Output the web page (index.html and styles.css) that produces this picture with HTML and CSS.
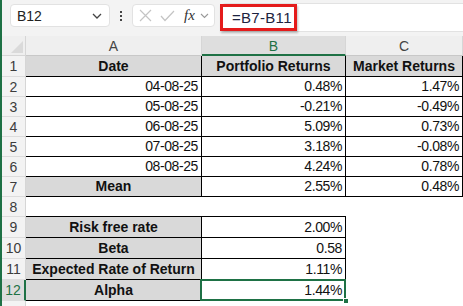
FILE: index.html
```html
<!DOCTYPE html>
<html lang="en">
<head>
    <meta charset="UTF-8">
    <title>Alpha</title>
    <link rel="stylesheet" href="styles.css">
</head>
<body>
    <div class="window">
        <!-- Barra de fórmulas -->
        <div class="toolbar">
            <div class="name-box">
                <span>B12</span>
                <svg class="chev" width="10" height="6" viewBox="0 0 10 6"><polyline points="1,1 5,5 9,1" fill="none" stroke="#444" stroke-width="1.3"/></svg>
            </div>
            <div class="dots"><i></i><i></i><i></i></div>
            <div class="fx-box">
                <svg width="13" height="13" viewBox="0 0 13 13"><path d="M1 1 L12 12 M12 1 L1 12" stroke="#c4c4c4" stroke-width="1.2"/></svg>
                <svg width="15" height="12" viewBox="0 0 15 12"><polyline points="1,6 5,10.5 14,1" fill="none" stroke="#c4c4c4" stroke-width="1.2"/></svg>
                <span class="fx">fx</span>
                <svg class="chev-sm" width="9" height="6" viewBox="0 0 9 6"><polyline points="1,1 4.5,4.5 8,1" fill="none" stroke="#999" stroke-width="1.1"/></svg>
            </div>
            <div class="formula">
                <span class="formula-text">=B7-B11</span>
            </div>
        </div>

        <!-- Hoja -->
        <div class="sheet">
            <div class="corner"><span class="tri"></span></div>
            <div class="colhead">A</div>
            <div class="colhead active">B</div>
            <div class="colhead">C</div>

            <div class="rowhead">1</div>
            <div class="cell head bl">Date</div>
            <div class="cell head bl">Portfolio Returns</div>
            <div class="cell head bl">Market Returns</div>

            <div class="rowhead">2</div>
            <div class="cell num bl">04-08-25</div>
            <div class="cell num bl">0.48%</div>
            <div class="cell num bl">1.47%</div>

            <div class="rowhead">3</div>
            <div class="cell num bl">05-08-25</div>
            <div class="cell num bl">-0.21%</div>
            <div class="cell num bl">-0.49%</div>

            <div class="rowhead">4</div>
            <div class="cell num bl">06-08-25</div>
            <div class="cell num bl">5.09%</div>
            <div class="cell num bl">0.73%</div>

            <div class="rowhead">5</div>
            <div class="cell num bl">07-08-25</div>
            <div class="cell num bl">3.18%</div>
            <div class="cell num bl">-0.08%</div>

            <div class="rowhead">6</div>
            <div class="cell num bl">08-08-25</div>
            <div class="cell num bl">4.24%</div>
            <div class="cell num bl">0.78%</div>

            <div class="rowhead">7</div>
            <div class="cell head bl">Mean</div>
            <div class="cell num bl">2.55%</div>
            <div class="cell num bl">0.48%</div>

            <div class="rowhead">8</div>
            <div class="cell bb"></div>
            <div class="cell bb"></div>
            <div class="cell"></div>

            <div class="rowhead">9</div>
            <div class="cell head bl">Risk free rate</div>
            <div class="cell num bl">2.00%</div>
            <div class="cell"></div>

            <div class="rowhead">10</div>
            <div class="cell head bl">Beta</div>
            <div class="cell num bl">0.58</div>
            <div class="cell"></div>

            <div class="rowhead">11</div>
            <div class="cell head bl">Expected Rate of Return</div>
            <div class="cell num bl">1.11%</div>
            <div class="cell"></div>

            <div class="rowhead active">12</div>
            <div class="cell head bl">Alpha</div>
            <div class="cell num bl selected">1.44%<span class="sel-box"></span><span class="handle"></span></div>
            <div class="cell"></div>

            <div class="rowhead"></div>
            <div class="cell"></div>
            <div class="cell"></div>
            <div class="cell"></div>
        </div>
    </div>
</body>
</html>
```

FILE: styles.css
```css
* {
    margin: 0;
    padding: 0;
    box-sizing: border-box;
}

body {
    font-family: 'Liberation Sans', Arial, sans-serif;
    background: #ffffff;
    width: 463px;
    height: 306px;
    overflow: hidden;
}

.window {
    border-left: 2px solid #1e7145;
    height: 306px;
}

/* Barra superior */
.toolbar {
    height: 36px;
    background: #f3f3f3;
    display: flex;
    align-items: flex-start;
    padding: 4px 0 0 8px;
}

.name-box {
    width: 100px;
    height: 23px;
    background: #ffffff;
    border: 1px solid #e2e2e2;
    border-radius: 4px;
    display: flex;
    align-items: center;
    justify-content: space-between;
    padding: 0 7px 0 6px;
    font-size: 14px;
    color: #222;
}

.dots {
    width: 22px;
    height: 23px;
    display: flex;
    flex-direction: column;
    align-items: center;
    justify-content: center;
    gap: 2px;
}

.dots i {
    width: 2px;
    height: 2px;
    background: #444;
}

.fx-box {
    width: 83px;
    height: 23px;
    background: #ffffff;
    border: 1px solid #e2e2e2;
    border-radius: 4px;
    display: flex;
    align-items: center;
    gap: 8px;
    padding-left: 6px;
}

.fx {
    font-family: 'Liberation Serif', serif;
    font-style: italic;
    font-size: 15px;
    color: #333;
    margin-left: 1px;
}

.chev-sm {
    margin-left: -3px;
}

.formula {
    flex: 1;
    height: 29px;
    margin-left: 7px;
    margin-top: -1px;
    background: #ffffff;
    border: 1px solid #e2e2e2;
    border-right: none;
    border-radius: 4px 0 0 4px;
    position: relative;
}

/* Recuadro rojo sobre la fórmula */
.formula-text {
    position: absolute;
    left: -3px;
    top: 0;
    width: 77px;
    height: 27px;
    border: 3px solid #e41b1b;
    box-shadow: 1px 2px 2px rgba(0, 0, 0, 0.25);
    font-size: 15px;
    color: #1c2340;
    padding: 2px 0 0 9px;
    letter-spacing: 0.3px;
}

/* Cuadrícula */
.sheet {
    display: grid;
    grid-template-columns: 24px 176px 144px 117px;
    grid-template-rows: 20px 21px 20px 20px 20px 20px 20px 20px 20px 21px 21px 21px 21px 10px;
}

.corner {
    background: #efefef;
    border-right: 1px solid #d6d6d6;
    border-bottom: 1px solid #d6d6d6;
    position: relative;
}

.tri {
    position: absolute;
    right: 2px;
    bottom: 2px;
    width: 0;
    height: 0;
    border-left: 12px solid transparent;
    border-bottom: 12px solid #dadada;
}

.colhead {
    background: #efefef;
    border-right: 1px solid #d6d6d6;
    border-bottom: 1px solid #c8c8c8;
    color: #444;
    font-size: 14px;
    display: flex;
    align-items: center;
    justify-content: center;
    padding-top: 1px;
}

.colhead.active {
    background: #dedede;
    color: #1e7145;
    border-bottom: 2px solid #1e7145;
}

.rowhead {
    background: #f3f3f3;
    border-right: 1px solid #d6d6d6;
    border-bottom: 1px solid #dcdcdc;
    color: #3c3c3c;
    font-size: 14px;
    display: flex;
    align-items: center;
    justify-content: center;
}

.rowhead.active {
    background: #dcdcdc;
    color: #1e7145;
    border-right: 2px solid #1e7145;
}

.cell {
    font-size: 14px;
    color: #111;
    display: flex;
    align-items: flex-end;
    padding: 0 3px 2px;
    white-space: nowrap;
}

.cell.bl {
    border-right: 1px solid #000;
    border-bottom: 1px solid #000;
}

.cell.bb {
    border-bottom: 1px solid #000;
}

.cell.head {
    background: #d9d9d9;
    font-weight: bold;
    justify-content: center;
}

.cell.num {
    justify-content: flex-end;
    letter-spacing: -0.4px;
}

/* Celda activa */
.cell.selected {
    position: relative;
}

.sel-box {
    position: absolute;
    left: -2px;
    top: -1px;
    right: -1px;
    bottom: -1px;
    border: 2px solid #1e7145;
}

.handle {
    position: absolute;
    right: -4px;
    bottom: -4px;
    width: 6px;
    height: 6px;
    background: #1e7145;
    border: 1px solid #ffffff;
}
```
